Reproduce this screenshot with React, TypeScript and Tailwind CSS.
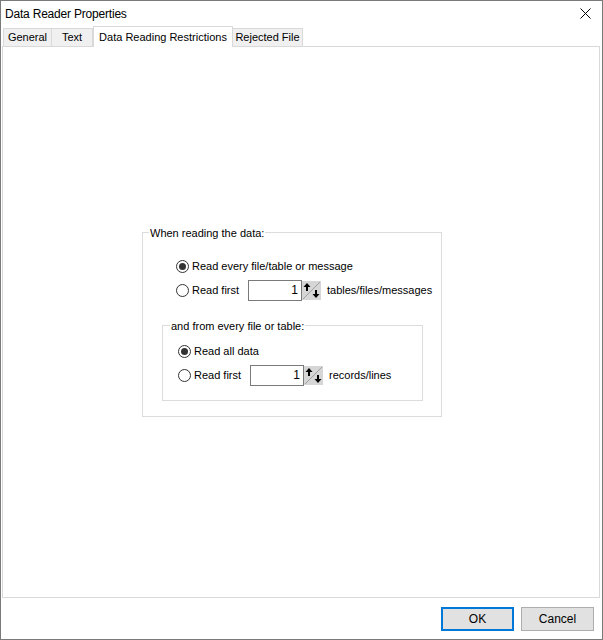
import React, { useState } from 'react';

const Radio = ({ checked }: { checked: boolean }) => (
  <span className="w-[13px] h-[13px] rounded-full border border-[#333] bg-white flex items-center justify-center shrink-0">
    {checked && <span className="w-[7px] h-[7px] rounded-full bg-[#333]" />}
  </span>
);

// little up/down spinner drawn as one square
const Spinner = () => (
  <svg width="19" height="19" viewBox="0 0 19 19" className="shrink-0">
    <rect x="0" y="0" width="19" height="19" fill="#d6d6d6" />
    <line x1="1" y1="18" x2="18" y2="1" stroke="#a0a0a0" strokeWidth="1" />
    <path d="M5 2 L8.5 6 L6 6 L6 10 L4 10 L4 6 L1.5 6 Z" fill="#000" />
    <path d="M14 17 L10.5 13 L13 13 L13 9 L15 9 L15 13 L17.5 13 Z" fill="#000" />
  </svg>
);

const NumberBox = ({ value }: { value: number }) => (
  <div className="flex items-center">
    <div className="w-[54px] h-[21px] border border-[#7a7a7a] bg-white flex items-center justify-end pr-[3px] text-[12px]">
      {value}
    </div>
    <Spinner />
  </div>
);

function App() {
  const [tab] = useState('Data Reading Restrictions');
  const tabs = [
    { name: 'General', cls: 'w-[48px] border-l' },
    { name: 'Text', cls: 'w-[42px] border-l border-r' },
    { name: 'Data Reading Restrictions', cls: 'w-[140px] border-l border-r' },
    { name: 'Rejected File', cls: 'w-[70px] border-r' },
  ];

  return (
    <div className="w-[603px] h-[640px] bg-white border border-[#7a7a7a] flex flex-col font-['Liberation_Sans',Arial,sans-serif] text-[11px] text-black">
      <div className="h-[25px] shrink-0 flex items-center justify-between pl-[4px] pr-[11px]">
        <span className="text-[12px] tracking-[-0.2px]">Data Reader Properties</span>
        <svg width="11" height="11" viewBox="0 0 11 11">
          <path d="M0.5 0.5 L10.5 10.5 M10.5 0.5 L0.5 10.5" stroke="#000" strokeWidth="1" />
        </svg>
      </div>

      <div className="h-[21px] shrink-0 flex items-end pl-[2px] -mb-[1px] relative z-10">
        {tabs.map((t) =>
          t.name === tab ? (
            <div key={t.name} className={`${t.cls} h-[21px] border-t border-[#d9d9d9] bg-white flex items-start justify-center pt-[2px]`}>
              {t.name}
            </div>
          ) : (
            <div key={t.name} className={`${t.cls} h-[18px] mb-[1px] border-t border-[#d9d9d9] bg-[#f0f0f0] flex items-center justify-center`}>
              {t.name}
            </div>
          )
        )}
      </div>

      <div className="h-[552px] shrink-0 ml-[1px] mr-[2px] border border-[#d9d9d9] pt-[185px] pl-[139px]">
        <div className="relative w-[300px] h-[185px] border border-[#dcdcdc] pt-[21px] pl-[33px]">
          <span className="absolute left-[6px] -top-[8px] bg-white px-[1px]">When reading the data:</span>
          <div className="h-[24px] flex items-center">
            <Radio checked />
            <span className="ml-[3px]">Read every file/table or message</span>
          </div>
          <div className="h-[24px] flex items-center">
            <Radio checked={false} />
            <span className="ml-[3px] w-[56px]">Read first</span>
            <NumberBox value={1} />
            <span className="ml-[6px]">tables/files/messages</span>
          </div>

          <div className="relative -ml-[14px] mt-[23px] w-[261px] h-[76px] border border-[#dcdcdc] pt-[13px] pl-[15px]">
            <span className="absolute left-[7px] -top-[8px] bg-white px-[1px]">and from every file or table:</span>
            <div className="h-[24px] flex items-center">
              <Radio checked />
              <span className="ml-[3px]">Read all data</span>
            </div>
            <div className="h-[24px] flex items-center">
              <Radio checked={false} />
              <span className="ml-[3px] w-[56px]">Read first</span>
              <NumberBox value={1} />
              <span className="ml-[6px]">records/lines</span>
            </div>
          </div>
        </div>
      </div>

      <div className="flex-1 flex justify-end items-start gap-[7px] pt-[9px] pr-[8px]">
        <button className="w-[73px] h-[24px] border-2 border-[#0078d7] bg-[#e1e1e1] text-[12px]">OK</button>
        <button className="w-[73px] h-[24px] border border-[#adadad] bg-[#e1e1e1] text-[12px]">Cancel</button>
      </div>
    </div>
  );
}

export default App;
